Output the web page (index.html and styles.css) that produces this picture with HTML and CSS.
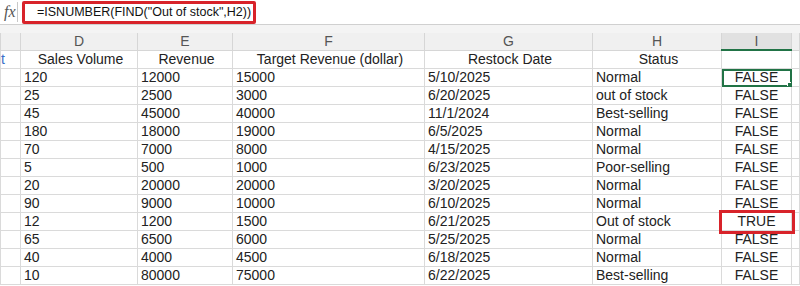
FILE: index.html
```html
<!DOCTYPE html>
<html lang="en">
<head>
  <meta charset="UTF-8">
  <title>ISNUMBER FIND</title>
  <link rel="stylesheet" href="styles.css">
</head>
<body>
  <div class="formula-bar">
    <span class="fx">fx</span>
    <div class="formula">=ISNUMBER(FIND("Out of stock",H2))</div>
  </div>
  <div class="gap"></div>
  <table class="sheet">
    <colgroup>
      <col style="width:20px"><col style="width:117px"><col style="width:95px"><col style="width:192px">
      <col style="width:168px"><col style="width:129px"><col style="width:70px"><col>
    </colgroup>
    <thead>
      <tr>
        <th></th><th>D</th><th>E</th><th>F</th><th>G</th><th>H</th><th class="active">I</th><th></th>
      </tr>
    </thead>
    <tbody>
      <tr class="head">
        <td class="cut">t</td><td>Sales Volume</td><td>Revenue</td><td>Target Revenue (dollar)</td><td>Restock Date</td><td>Status</td><td></td><td></td>
      </tr>
    </tbody>
    <tbody id="rows"></tbody>
  </table>

  <script>
    const data = [
      [120, 12000, 15000, '5/10/2025', 'Normal', 'FALSE'],
      [25, 2500, 3000, '6/20/2025', 'out of stock', 'FALSE'],
      [45, 45000, 40000, '11/1/2024', 'Best-selling', 'FALSE'],
      [180, 18000, 19000, '6/5/2025', 'Normal', 'FALSE'],
      [70, 7000, 8000, '4/15/2025', 'Normal', 'FALSE'],
      [5, 500, 1000, '6/23/2025', 'Poor-selling', 'FALSE'],
      [20, 20000, 20000, '3/20/2025', 'Normal', 'FALSE'],
      [90, 9000, 10000, '6/10/2025', 'Normal', 'FALSE'],
      [12, 1200, 1500, '6/21/2025', 'Out of stock', 'TRUE'],
      [65, 6500, 6000, '5/25/2025', 'Normal', 'FALSE'],
      [40, 4000, 4500, '6/18/2025', 'Normal', 'FALSE'],
      [10, 80000, 75000, '6/22/2025', 'Best-selling', 'FALSE']
    ];
    const body = document.getElementById('rows');
    body.innerHTML = data.map((r, i) => {
      let cls = 'bool';
      if (i === 0) cls += ' selected';
      if (r[5] === 'TRUE') cls += ' marked';
      return '<tr><td></td>' + r.slice(0, 5).map(v => `<td>${v}</td>`).join('') +
        `<td class="${cls}">${r[5]}</td><td></td></tr>`;
    }).join('');
  </script>
</body>
</html>
```

FILE: styles.css
```css
body {
  margin: 0;
  background: #fff;
  font-family: "Liberation Sans", "Noto Sans CJK SC", sans-serif;
  color: #222;
  overflow: hidden;
}
.formula-bar {
  height: 24px;
  display: flex;
  align-items: center;
  border-bottom: solid 1px #d0d0d0;
}
.fx {
  width: 13px;
  padding-left: 4px;
  font-family: "Liberation Serif", serif;
  font-style: italic;
  font-size: 16px;
  color: #555;
  border-right: solid 1px #c8c8c8;
  line-height: 20px;
}
.formula {
  margin-left: 4px;
  width: 216px;
  height: 17px;
  border: solid 3px #d8232a;
  border-radius: 2px;
  padding-left: 12px;
  font-size: 12.5px;
  line-height: 17px;
  color: #111;
  white-space: nowrap;
}
.gap {
  height: 8px;
  background: #f4f4f4;
}
.sheet {
  border-collapse: collapse;
  table-layout: fixed;
  width: 800px;
  font-size: 14px;
}
.sheet th {
  height: 16px;
  padding: 0;
  background: #f0f0f0;
  border: solid 1px #d6d6d6;
  border-top: none;
  font-weight: normal;
  color: #555;
  font-size: 14px;
  line-height: 16px;
}
.sheet th.active {
  background: #e1e1e1;
  border-bottom: solid 2px #217346;
}
.sheet td {
  height: 17px;
  padding: 0 0 0 3px;
  border: solid 1px #dadada;
  line-height: 17px;
  white-space: nowrap;
  overflow: hidden;
}
.head td {
  text-align: center;
}
.head td.cut {
  text-align: left;
  padding: 0;
  color: #3a6ec8;
}
td.bool {
  text-align: center;
  padding: 0;
  position: relative;
}
td.selected {
  outline: solid 2px #217346;
  outline-offset: -2px;
}
td.selected::after {
  content: "";
  position: absolute;
  right: -3px;
  bottom: -3px;
  width: 5px;
  height: 5px;
  background: #217346;
  border: solid 1px #fff;
}
td.marked {
  outline: solid 3px #d8232a;
  outline-offset: 0;
}
```
